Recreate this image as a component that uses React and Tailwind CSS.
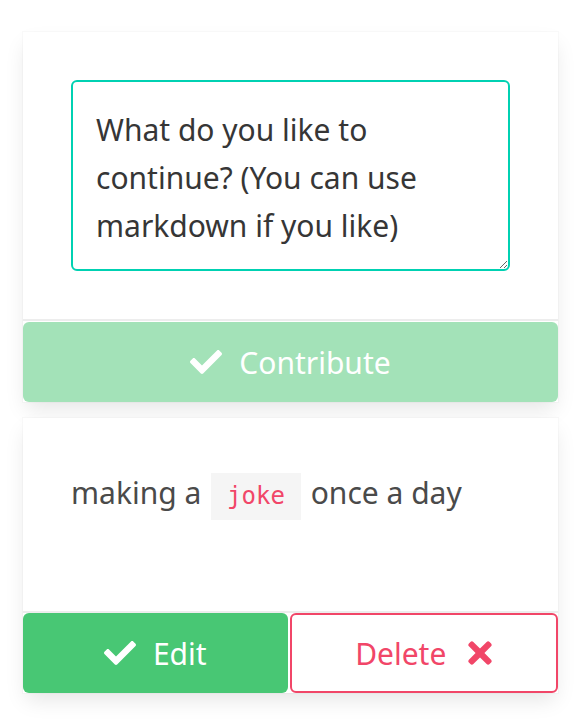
import { FaCheck, FaTimes } from "react-icons/fa";

const font = { fontFamily: '"Noto Sans", "Open Sans", sans-serif' };

export default function App() {
  return (
    <div className="min-h-[722px] bg-white px-[23px] pt-[32px] text-[#4a4a4a]" style={font}>
      <div className="w-[535px] bg-white shadow-[0_10px_20px_-3px_rgba(10,10,10,0.1),0_0_0_1px_rgba(10,10,10,0.02)]">
        <div className="p-[48px]">
          <textarea
            rows={3}
            className="block h-[191px] w-full resize-y rounded-[6px] border-2 border-[#00d1b2] px-[23px] py-[24px] text-[30px] leading-[48px] text-[#363636] outline-none placeholder:text-[#363636]"
            placeholder="What do you like to continue? (You can use markdown if you like)"
          />
        </div>
        <div className="flex border-t-2 border-[#ededed] pt-px">
          <button className="flex h-[80px] flex-1 items-center justify-center gap-[17px] rounded-[6px] bg-[#a3e2b8] text-[30px] text-white">
            <FaCheck className="h-[32px] w-[32px]" />
            <span>Contribute</span>
          </button>
        </div>
      </div>

      <div className="mt-[16px] w-[535px] bg-white shadow-[0_10px_20px_-3px_rgba(10,10,10,0.1),0_0_0_1px_rgba(10,10,10,0.02)]">
        <div className="h-[193px] px-[48px] pt-[51px]">
          <p className="text-[30px] leading-[48px]">
            making a{" "}
            <code
              className="mx-[2px] inline-block bg-[#f5f5f5] px-[16px] text-[24px] leading-[47px] text-[#f14668]"
              style={{ fontFamily: '"DejaVu Sans Mono", monospace' }}
            >
              joke
            </code>{" "}
            once a day
          </p>
        </div>
        <div className="flex gap-[2px] border-t-2 border-[#ededed]">
          <button className="flex h-[80px] flex-1 items-center justify-center gap-[17px] rounded-[6px] bg-[#48c774] text-[30px] text-white">
            <FaCheck className="h-[32px] w-[32px]" />
            <span>Edit</span>
          </button>
          <button className="flex h-[80px] flex-1 items-center justify-center gap-[22px] rounded-[6px] border-2 border-[#f14668] bg-white text-[30px] text-[#f14668]">
            <span>Delete</span>
            <FaTimes className="h-[34px] w-[24px]" />
          </button>
        </div>
      </div>
    </div>
  );
}
